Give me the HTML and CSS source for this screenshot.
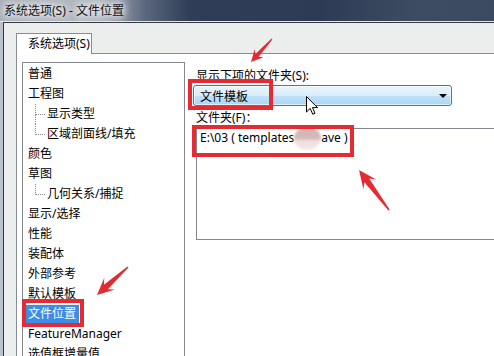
FILE: index.html
```html
<!DOCTYPE html>
<html lang="zh-CN">
<head>
    <meta charset="UTF-8">
    <meta name="viewport" content="width=device-width, initial-scale=1.0">
    <title>系统选项(S) - 文件位置</title>
    <link rel="stylesheet" href="styles.css">
</head>
<body>

    <div class="titlebar"><span class="title">系统选项(S) - 文件位置</span></div>

    <div class="frame">
        <div class="dialog">
            <div class="tabs">
                <div class="tab">系统选项(S)</div>
                <div class="tab-rest"></div>
            </div>

            <div class="panel">
                <ul class="tree">
                    <li>普通</li>
                    <li>工程图</li>
                    <li class="child mid">显示类型</li>
                    <li class="child">区域剖面线/填充</li>
                    <li>颜色</li>
                    <li>草图</li>
                    <li class="child">几何关系/捕捉</li>
                    <li>显示/选择</li>
                    <li>性能</li>
                    <li>装配体</li>
                    <li>外部参考</li>
                    <li>默认模板</li>
                    <li><span class="selected">文件位置</span></li>
                    <li>FeatureManager</li>
                    <li>选值框增量值</li>
                </ul>

                <div class="settings">
                    <label class="field-label">显示下项的文件夹(S):</label>
                    <div class="combo">
                        <span>文件模板</span>
                        <span class="caret"></span>
                    </div>
                    <label class="field-label">文件夹(F)：</label>
                    <div class="folders">
                        <div class="folder-row">E:\03 ( templates<span class="smudge"></span>ave )</div>
                    </div>
                </div>
            </div>
        </div>
    </div>

    <!-- annotations drawn on top of the screenshot -->
    <div class="mark mark-combo"></div>
    <div class="mark mark-folder"></div>
    <div class="mark mark-item"></div>

    <svg class="arrows" width="494" height="356" viewBox="0 0 494 356">
        <polygon points="272.4,39.4 258.7,56.8 263.5,57.2 251,62 254.7,49.1 255.4,53.9 271.6,38.6"/>
        <polygon points="388.4,210.5 364.4,182.2 363.4,189.2 359,170 376.2,179.6 369.2,178.6 389.6,209.5"/>
        <polygon points="128.5,267.6 107.9,289.2 115,289.6 97,295 104.3,277.7 103.9,284.7 127.5,266.4"/>
    </svg>

    <svg class="cursor" width="13" height="20" viewBox="0 0 13 20">
        <path d="M0.5 0.5 V16 L4.2 12.4 L6.8 18.3 L9 17.3 L6.5 11.6 H11.5 Z"/>
    </svg>

</body>
</html>
```

FILE: styles.css
```css
html, body {
    margin: 0;
    width: 494px;
    height: 356px;
    overflow: hidden;
}
body {
    position: relative;
    font-family: "Noto Sans", "Noto Sans CJK SC", sans-serif;
    font-size: 12px;
    color: #000;
    background-color: #bfc5cd;
}

/* window chrome */
.titlebar {
    height: 21px;
    background: linear-gradient(90deg, #a9b0ba 0, #b4bac3 100px, #5a677d 145px, #2f3d56 190px, #2d3b54 320px, #3e4c63 420px, #3c4a61 494px);
}
.title {
    display: inline-block;
    padding-left: 4px;
    line-height: 21px;
    color: #111;
    text-shadow: 0 0 6px #fff, 0 0 8px #fff, 0 0 10px rgba(255, 255, 255, 0.8);
}
.frame {
    border-top: 1px solid #e4e7eb;
    padding-left: 3px;
    background-color: #bcc2ca;
}
.dialog {
    height: 400px;
    padding: 10px 0 0 12px;
    border-top: 1px solid #34383e;
    border-left: 1px solid #34383e;
    background-color: #eceeed;
}

/* tab strip */
.tabs {
    display: flex;
    align-items: flex-end;
    height: 21px;
}
.tab {
    box-sizing: border-box;
    width: 76px;
    height: 21px;
    padding-left: 11px;
    line-height: 19px;
    background-color: #fff;
    border: 1px solid #898c95;
    border-bottom: none;
}
.tab-rest {
    flex: 1;
    border-bottom: 1px solid #898c95;
}
.panel {
    display: flex;
    align-items: flex-start;
    width: 560px;
    height: 330px;
    padding: 8px 0 0 5px;
    border-left: 1px solid #898c95;
    background-color: #fff;
}

/* category tree */
.tree {
    list-style: none;
    margin: 0;
    padding: 1px 0;
    width: 161px;
    height: 320px;
    border: 1px solid #828790;
}
.tree li {
    position: relative;
    height: 20px;
    line-height: 20px;
    padding-left: 5px;
    white-space: nowrap;
}
.tree .child {
    padding-left: 24px;
}
.tree .child::before,
.tree .mid::after {
    content: "";
    position: absolute;
    left: 12px;
    width: 9px;
    border-left: 1px dotted #8a8a8a;
}
.tree .child::before {
    top: 0;
    height: 10px;
    border-bottom: 1px dotted #8a8a8a;
}
.tree .mid::after {
    top: 10px;
    height: 10px;
}
.selected {
    display: inline-block;
    margin-left: -2px;
    padding: 0 3px 0 2px;
    line-height: 18px;
    color: #fff;
    background-color: #3d8de6;
}

/* right side */
.settings {
    margin: 6px 0 0 11px;
}
.field-label {
    display: block;
    line-height: 16px;
}
.combo {
    box-sizing: border-box;
    display: flex;
    align-items: center;
    justify-content: space-between;
    width: 259px;
    height: 21px;
    margin: 1px 0 4px -3px;
    padding: 0 4px 0 6px;
    border: 1px solid #3d7bad;
    border-radius: 3px;
    background: linear-gradient(#eaf5fd 0, #d9edfc 50%, #c0e1f9 51%, #acd6f6 100%);
    box-shadow: inset 0 0 0 1px rgba(255, 255, 255, 0.6);
}
.caret {
    width: 0;
    height: 0;
    border-left: 4px solid transparent;
    border-right: 4px solid transparent;
    border-top: 4px solid #000;
}
.folders {
    box-sizing: border-box;
    width: 320px;
    height: 112px;
    margin-top: 2px;
    padding-left: 3px;
    border: 1px solid #828790;
}
.folder-row {
    line-height: 18px;
    white-space: pre;
}
.smudge {
    position: relative;
    display: inline-block;
    width: 27px;
    height: 18px;
    vertical-align: top;
}
.smudge::before {
    content: "";
    position: absolute;
    left: 0;
    right: 0;
    top: -2px;
    bottom: -3px;
    border-radius: 50%;
    background: linear-gradient(#d2b3b3 0, #d6b9b9 50%, #efdfdf 60%, #f4e8e8 100%);
    filter: blur(1px);
}

/* annotations */
.mark {
    position: absolute;
    box-sizing: border-box;
    border: 4px solid #e52b31;
}
.mark-combo {
    left: 188px;
    top: 79px;
    width: 85px;
    height: 31px;
}
.mark-folder {
    left: 192px;
    top: 125px;
    width: 162px;
    height: 32px;
}
.mark-item {
    left: 22px;
    top: 299px;
    width: 62px;
    height: 28px;
}
.arrows {
    position: absolute;
    left: 0;
    top: 0;
    fill: #e52b31;
}
.cursor {
    position: absolute;
    left: 306px;
    top: 96px;
    fill: #fff;
    stroke: #000;
    stroke-width: 1;
    stroke-linejoin: miter;
}
```
